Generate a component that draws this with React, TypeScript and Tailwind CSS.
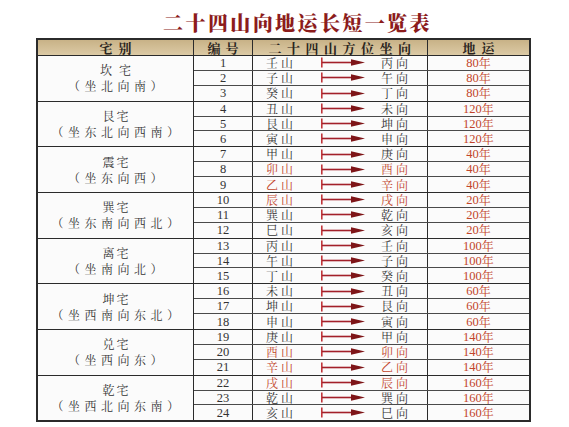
import React from "react";

type Row = { n: number; a: string; b: string; y: string; red?: boolean };
type Group = { l1: string; l2: string; rows: Row[] };

const groups: Group[] = [
  { l1: "坎 宅", l2: "（坐北向南）", rows: [
    { n: 1, a: "壬山", b: "丙向", y: "80" },
    { n: 2, a: "子山", b: "午向", y: "80" },
    { n: 3, a: "癸山", b: "丁向", y: "80" },
  ] },
  { l1: "艮宅", l2: "（坐东北向西南）", rows: [
    { n: 4, a: "丑山", b: "未向", y: "120" },
    { n: 5, a: "艮山", b: "坤向", y: "120" },
    { n: 6, a: "寅山", b: "申向", y: "120" },
  ] },
  { l1: "震宅", l2: "（坐东向西）", rows: [
    { n: 7, a: "甲山", b: "庚向", y: "40" },
    { n: 8, a: "卯山", b: "酉向", y: "40", red: true },
    { n: 9, a: "乙山", b: "辛向", y: "40", red: true },
  ] },
  { l1: "巽宅", l2: "（坐东南向西北）", rows: [
    { n: 10, a: "辰山", b: "戌向", y: "20", red: true },
    { n: 11, a: "巽山", b: "乾向", y: "20" },
    { n: 12, a: "巳山", b: "亥向", y: "20" },
  ] },
  { l1: "离宅", l2: "（坐南向北）", rows: [
    { n: 13, a: "丙山", b: "壬向", y: "100" },
    { n: 14, a: "午山", b: "子向", y: "100" },
    { n: 15, a: "丁山", b: "癸向", y: "100" },
  ] },
  { l1: "坤宅", l2: "（坐西南向东北）", rows: [
    { n: 16, a: "未山", b: "丑向", y: "60" },
    { n: 17, a: "坤山", b: "艮向", y: "60" },
    { n: 18, a: "申山", b: "寅向", y: "60" },
  ] },
  { l1: "兑宅", l2: "（坐西向东）", rows: [
    { n: 19, a: "庚山", b: "甲向", y: "140" },
    { n: 20, a: "酉山", b: "卯向", y: "140", red: true },
    { n: 21, a: "辛山", b: "乙向", y: "140", red: true },
  ] },
  { l1: "乾宅", l2: "（坐西北向东南）", rows: [
    { n: 22, a: "戌山", b: "辰向", y: "160", red: true },
    { n: 23, a: "乾山", b: "巽向", y: "160" },
    { n: 24, a: "亥山", b: "巳向", y: "160" },
  ] },
];

const cjk = "font-['Noto_Serif_CJK_SC','Noto_Sans_CJK_SC',serif]";

function Arrow() {
  return (
    <svg width="44" height="11" viewBox="0 0 44 11" className="block">
      <rect x="0" y="0.5" width="1.6" height="10" fill="#c0353a" />
      <rect x="1" y="4.7" width="31" height="1.6" fill="#a3202a" />
      <polygon points="30,2.2 44,5.5 30,8.8" fill="#7e1518" />
    </svg>
  );
}

export default function App() {
  return (
    <div className="w-[569px] h-[427px] bg-white pt-[12px] overflow-hidden">
      <div className="flex justify-center pl-[26px]">
        <div
          className={`${cjk} text-[20px] leading-[22px] font-black tracking-[2.4px] text-[#8c1c1c] whitespace-nowrap`}
        >
          二十四山向地运长短一览表
        </div>
      </div>
      <div className="ml-[36px] mt-[4px] w-[495px] border-2 border-[#2b2b2b] bg-[#fbfbfb]">
        <div
          className={`${cjk} flex h-[16px] items-center border-b border-[#2b2b2b] bg-gradient-to-b from-[#c8b287] to-[#dccaa5] text-[13px] leading-[13px] font-bold text-[#2a2420] whitespace-nowrap`}
        >
          <div className="w-[156px] h-full flex items-center justify-center border-r border-[#2b2b2b] tracking-[6px] pl-[6px]">宅别</div>
          <div className="w-[59px] h-full flex items-center justify-center border-r border-[#2b2b2b] tracking-[5px] pl-[5px]">编号</div>
          <div className="w-[175px] h-full flex items-center justify-center border-r border-[#2b2b2b] tracking-[5.5px] pl-[5px]">二十四山方位坐向</div>
          <div className="flex-1 h-full flex items-center justify-center tracking-[6px] pl-[6px]">地运</div>
        </div>
        {groups.map((g, gi) => (
          <div
            key={gi}
            className={`flex ${gi < groups.length - 1 ? "border-b border-[#2b2b2b]" : ""}`}
          >
            <div
              className={`${cjk} w-[156px] shrink-0 border-r border-[#2b2b2b] flex flex-col items-center justify-center text-[12px] leading-[16px] text-[#333] whitespace-nowrap`}
            >
              <div className="tracking-[2px] pl-[2px]">{g.l1}</div>
              <div className="tracking-[4.5px] pl-[4px]">{g.l2}</div>
            </div>
            <div className="flex-1 flex flex-col">
              {g.rows.map((r, ri) => (
                <div
                  key={r.n}
                  className={`flex h-[14.9px] items-center ${ri < 2 ? "border-b border-[#4a4a4a]" : ""}`}
                >
                  <div className="w-[59px] shrink-0 h-full border-r border-[#2b2b2b] flex items-center justify-center font-['Liberation_Serif',serif] text-[12.5px] leading-[12px] text-[#333]">
                    {r.n}
                  </div>
                  <div className="w-[175px] shrink-0 h-full border-r border-[#2b2b2b] flex items-center pl-[13px] whitespace-nowrap">
                    <span
                      className={`${cjk} shrink-0 w-[30px] text-[12px] leading-[12px] tracking-[3px] ${r.red ? "text-[#c2452b]" : "text-[#333]"}`}
                    >
                      {r.a}
                    </span>
                    <span className="ml-[25px] shrink-0">
                      <Arrow />
                    </span>
                    <span
                      className={`${cjk} ml-[16px] shrink-0 text-[12px] leading-[12px] tracking-[3px] ${r.red ? "text-[#c2452b]" : "text-[#333]"}`}
                    >
                      {r.b}
                    </span>
                  </div>
                  <div className="flex-1 h-full flex items-center justify-center text-[#c2452b] text-[12.5px] leading-[12px] whitespace-nowrap">
                    <span className="font-['Liberation_Serif',serif]">{r.y}</span>
                    <span className={`${cjk} text-[12px]`}>年</span>
                  </div>
                </div>
              ))}
            </div>
          </div>
        ))}
      </div>
    </div>
  );
}
